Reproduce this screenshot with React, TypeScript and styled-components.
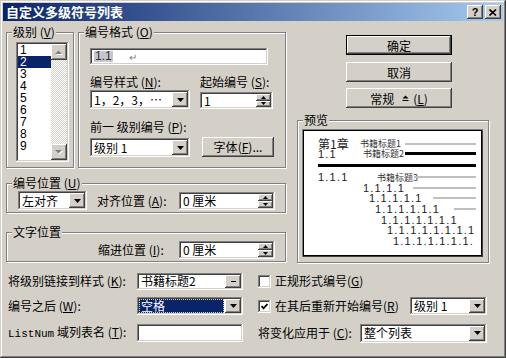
import React from 'react';
import styled, { createGlobalStyle, css } from 'styled-components';

const GlobalStyle = createGlobalStyle`
  html, body {
    margin: 0;
    padding: 0;
    background: #d4d0c8;
  }
  body {
    font-family: 'Noto Sans CJK SC', 'Liberation Sans', sans-serif;
    font-size: 12px;
    color: #000;
  }
`;

// classic 3D edges
const raised = css`
  background: #d4d0c8;
  box-shadow: inset -1px -1px #404040, inset 1px 1px #fff, inset -2px -2px #808080, inset 2px 2px #d4d0c8;
`;

const sunken = css`
  background: #fff;
  box-shadow: inset -1px -1px #fff, inset 1px 1px #808080, inset -2px -2px #d4d0c8, inset 2px 2px #404040;
`;

const Window = styled.div`
  width: 506px;
  height: 358px;
  box-sizing: border-box;
  padding: 3px;
  background: #d4d0c8;
  box-shadow: inset -1px -1px #404040, inset 1px 1px #d4d0c8, inset -2px -2px #808080, inset 2px 2px #fff;
  display: flex;
  flex-direction: column;
`;

const TitleBar = styled.div`
  height: 18px;
  display: flex;
  align-items: center;
  padding: 0 2px 0 3px;
  background: linear-gradient(to right, #0a246a, #a6caf0);
`;

const Title = styled.span`
  flex: 1;
  color: #fff;
  font-weight: bold;
  font-size: 13px;
  line-height: 18px;
`;

const CaptionButton = styled.div`
  ${raised};
  width: 16px;
  height: 14px;
  margin-left: 2px;
  display: flex;
  align-items: center;
  justify-content: center;
  font: bold 11px 'Liberation Sans', sans-serif;
`;

const Body = styled.div`
  padding: 11px 0 0 3px;
  display: flex;
  flex-direction: column;
`;

const TopRow = styled.div`
  display: flex;
  align-items: flex-start;
`;

const LeftCol = styled.div`
  width: 280px;
  display: flex;
  flex-direction: column;
`;

const RightCol = styled.div`
  width: 194px;
  margin-left: 10px;
  display: flex;
  flex-direction: column;
`;

const GroupRow = styled.div`
  display: flex;
  gap: 4px;
`;

const Group = styled.div<{ $w: number; $h: number; $mt?: number; $ml?: number }>`
  position: relative;
  box-sizing: border-box;
  width: ${({ $w }) => $w}px;
  height: ${({ $h }) => $h}px;
  margin-top: ${({ $mt }) => $mt || 0}px;
  margin-left: ${({ $ml }) => $ml || 0}px;
  border: 1px solid #808080;
  box-shadow: inset 1px 1px #fff, 1px 1px #fff;
`;

const Legend = styled.span`
  position: absolute;
  top: -8px;
  left: 5px;
  padding: 0 1px;
  background: #d4d0c8;
  line-height: 14px;
  white-space: nowrap;
`;

const GroupBody = styled.div<{ $pt: number; $pl: number }>`
  padding: ${({ $pt }) => $pt}px 0 0 ${({ $pl }) => $pl}px;
  display: flex;
  flex-direction: column;
`;

// list box
const ListBox = styled.div`
  ${sunken};
  box-sizing: border-box;
  width: 53px;
  height: 120px;
  padding: 2px;
  display: flex;
`;

const Items = styled.div`
  flex: 1;
  display: flex;
  flex-direction: column;
`;

const Item = styled.div<{ $sel?: boolean }>`
  height: 12px;
  line-height: 12px;
  padding-left: 2px;
  font-family: 'Liberation Sans', sans-serif;
  font-size: 12px;
  background: ${({ $sel }) => ($sel ? '#0a246a' : 'transparent')};
  color: ${({ $sel }) => ($sel ? '#fff' : '#000')};
`;

const ScrollBar = styled.div`
  width: 16px;
  display: flex;
  flex-direction: column;
`;

const ScrollTrack = styled.div`
  flex: 1;
  background: repeating-conic-gradient(#fff 0 25%, #d4d0c8 0 50%) 0 0 / 2px 2px;
`;

const SmallBtn = styled.div<{ $h: number }>`
  ${raised};
  width: 16px;
  height: ${({ $h }) => $h}px;
  display: flex;
  align-items: center;
  justify-content: center;
  flex-shrink: 0;
`;

// inputs
const Field = styled.div<{ $w: number; $h: number; $mt?: number }>`
  ${sunken};
  box-sizing: border-box;
  width: ${({ $w }) => $w}px;
  height: ${({ $h }) => $h}px;
  margin-top: ${({ $mt }) => $mt || 0}px;
  padding: 2px;
  display: flex;
  align-items: stretch;
  flex-shrink: 0;
`;

const FieldValue = styled.div<{ $sel?: boolean }>`
  flex: 1;
  display: flex;
  align-items: center;
  padding-left: 2px;
  margin-right: ${({ $sel }) => ($sel ? 1 : 0)}px;
  line-height: 12px;
  white-space: nowrap;
  background: ${({ $sel }) => ($sel ? '#0a246a' : 'transparent')};
  color: ${({ $sel }) => ($sel ? '#fff' : '#000')};
  outline: ${({ $sel }) => ($sel ? '1px dotted #d4d0c8' : 'none')};
  outline-offset: -1px;
`;

const Mark = styled.span`
  background: #c6c6ce;
  color: #333;
  font-family: 'Liberation Sans', sans-serif;
  padding: 0 1px;
  line-height: 11px;
`;

const ReturnMark = styled.span`
  color: #808080;
  font-size: 10px;
  margin-left: 16px;
`;

const SpinCol = styled.div`
  width: 15px;
  display: flex;
  flex-direction: column;
`;

const SpinBtn = styled.div`
  ${raised};
  flex: 1;
  display: flex;
  align-items: center;
  justify-content: center;
`;

const Button = styled.div<{ $w: number; $h: number; $mt?: number; $default?: boolean }>`
  box-sizing: border-box;
  width: ${({ $w }) => $w}px;
  height: ${({ $h }) => $h}px;
  margin-top: ${({ $mt }) => $mt || 0}px;
  display: flex;
  align-items: center;
  justify-content: center;
  white-space: nowrap;
  background: #d4d0c8;
  box-shadow: ${({ $default }) =>
    $default
      ? 'inset -1px -1px #000, inset 1px 1px #000, inset -2px -2px #404040, inset 2px 2px #fff, inset -3px -3px #808080'
      : 'inset -1px -1px #404040, inset 1px 1px #fff, inset -2px -2px #808080, inset 2px 2px #d4d0c8'};
`;

const Row = styled.div<{ $mt?: number; $h?: number; $align?: string }>`
  display: flex;
  align-items: ${({ $align }) => $align || 'center'};
  margin-top: ${({ $mt }) => $mt || 0}px;
  height: ${({ $h }) => ($h ? `${$h}px` : 'auto')};
`;

const Cell = styled.div<{ $w?: number; $ml?: number }>`
  width: ${({ $w }) => ($w ? `${$w}px` : 'auto')};
  margin-left: ${({ $ml }) => $ml || 0}px;
  flex-shrink: 0;
  white-space: nowrap;
  line-height: 14px;
`;

const ButtonStack = styled.div`
  margin: 3px 0 0 50px;
  display: flex;
  flex-direction: column;
`;

// preview
const PreviewBox = styled.div`
  box-sizing: border-box;
  width: 181px;
  height: 128px;
  background: #fff;
  box-shadow: inset 1px 1px #808080, inset -1px -1px #404040, inset 2px 2px #000, inset -2px -2px #000;
  padding: 9px 7px 0 16px;
  display: flex;
  flex-direction: column;
`;

const PRow = styled.div<{ $h: number; $indent?: number; $mt?: number }>`
  display: flex;
  align-items: center;
  height: ${({ $h }) => $h}px;
  padding-left: ${({ $indent }) => $indent || 0}px;
  margin-top: ${({ $mt }) => $mt || 0}px;
  flex-shrink: 0;
`;

const PNum = styled.span<{ $w?: number; $cjk?: boolean }>`
  width: ${({ $w }) => ($w ? `${$w}px` : 'auto')};
  flex-shrink: 0;
  white-space: nowrap;
  font-family: ${({ $cjk }) => ($cjk ? "'Noto Sans CJK SC', sans-serif" : "'Liberation Sans', sans-serif")};
  font-size: ${({ $cjk }) => ($cjk ? 12 : 11)}px;
  letter-spacing: ${({ $cjk }) => ($cjk ? 0 : 1.2)}px;
  line-height: 10px;
  color: #222;
`;

const PHeading = styled.span<{ $w: number }>`
  width: ${({ $w }) => $w}px;
  flex-shrink: 0;
  font-size: 9px;
  line-height: 9px;
  white-space: nowrap;
  color: #333;
`;

const PLine = styled.span<{ $thick?: boolean }>`
  flex: 1;
  height: ${({ $thick }) => ($thick ? 3 : 2)}px;
  background: ${({ $thick }) => ($thick ? '#000' : '#c0c0c0')};
`;

const Rule = styled.div`
  height: 3px;
  background: #000;
  margin-top: 6px;
  flex-shrink: 0;
`;

// bottom
const Bottom = styled.div`
  margin-left: 2px;
  display: flex;
  flex-direction: column;
`;

const RightPart = styled.div`
  width: 229px;
  margin-left: 15px;
  display: flex;
  align-items: center;
  justify-content: space-between;
`;

const CheckLabel = styled.div`
  display: flex;
  align-items: center;
  white-space: nowrap;
  line-height: 14px;
`;

const CheckBox = styled.div`
  ${sunken};
  width: 13px;
  height: 13px;
  margin-right: 4px;
  display: flex;
  align-items: center;
  justify-content: center;
  flex-shrink: 0;
`;

const Mono = styled.span`
  font-family: 'Liberation Mono', monospace;
  font-size: 11px;
`;

const Acc = ({ k }: { k: string }) => (
  <span>
    {' '}(<u>{k}</u>)
  </span>
);

const DownArrow = ({ small }: { small?: boolean }) => (
  <svg width="7" height="4" viewBox="0 0 7 4">
    {small ? <rect x="1" y="2" width="5" height="1" fill="#000" /> : <polygon points="0,0 7,0 3.5,4" fill="#000" />}
  </svg>
);

const GrayArrow = ({ up }: { up?: boolean }) => (
  <svg width="8" height="5" viewBox="0 0 8 5">
    <polygon points={up ? '1,5 8,5 4.5,1.5' : '1,1 8,1 4.5,4.5'} fill="#fff" />
    <polygon points={up ? '0,4 7,4 3.5,0.5' : '0,0 7,0 3.5,3.5'} fill="#808080" />
  </svg>
);

const SpinArrow = ({ up }: { up?: boolean }) => (
  <svg width="5" height="3" viewBox="0 0 5 3">
    <polygon points={up ? '0,3 5,3 2.5,0' : '0,0 5,0 2.5,3'} fill="#000" />
  </svg>
);

const Combo = ({ w, h, value, sel, mt, small }: { w: number; h: number; value: React.ReactNode; sel?: boolean; mt?: number; small?: boolean }) => (
  <Field $w={w} $h={h} $mt={mt}>
    <FieldValue $sel={sel}>{value}</FieldValue>
    <SmallBtn $h={h - 4}>
      <DownArrow small={small} />
    </SmallBtn>
  </Field>
);

const Spinner = ({ w, h, value, mt }: { w: number; h: number; value: string; mt?: number }) => (
  <Field $w={w} $h={h} $mt={mt}>
    <FieldValue>{value}</FieldValue>
    <SpinCol>
      <SpinBtn>
        <SpinArrow up />
      </SpinBtn>
      <SpinBtn>
        <SpinArrow />
      </SpinBtn>
    </SpinCol>
  </Field>
);

const levels = ['1', '2', '3', '4', '5', '6', '7', '8', '9'];

const cascade = [
  { indent: 45, w: 50, text: '1.1.1.1', line: true },
  { indent: 51, w: 64, text: '1.1.1.1.1', line: true },
  { indent: 57, w: 79, text: '1.1.1.1.1.1', line: true },
  { indent: 63, text: '1.1.1.1.1.1.1' },
  { indent: 69, text: '1.1.1.1.1.1.1.1' },
  { indent: 75, text: '1.1.1.1.1.1.1.' },
];

export default function App() {
  return (
    <>
      <GlobalStyle />
      <Window>
        <TitleBar>
          <Title>自定义多级符号列表</Title>
          <CaptionButton>?</CaptionButton>
          <CaptionButton>
            <svg width="8" height="7" viewBox="0 0 8 7">
              <path d="M0.5 0.5 L7 6.5 M7 0.5 L0.5 6.5" stroke="#000" strokeWidth="1.6" />
            </svg>
          </CaptionButton>
        </TitleBar>

        <Body>
          <TopRow>
            <LeftCol>
              <GroupRow>
                <Group $w={68} $h={136}>
                  <Legend>
                    级别<Acc k="V" />
                  </Legend>
                  <GroupBody $pt={9} $pl={9}>
                    <ListBox>
                      <Items>
                        {levels.map((l) => (
                          <Item key={l} $sel={l === '2'}>
                            {l}
                          </Item>
                        ))}
                      </Items>
                      <ScrollBar>
                        <SmallBtn $h={16}>
                          <GrayArrow up />
                        </SmallBtn>
                        <ScrollTrack />
                        <SmallBtn $h={16}>
                          <GrayArrow />
                        </SmallBtn>
                      </ScrollBar>
                    </ListBox>
                  </GroupBody>
                </Group>

                <Group $w={208} $h={136}>
                  <Legend>
                    编号格式<Acc k="O" />
                  </Legend>
                  <GroupBody $pt={15} $pl={11}>
                    <Field $w={178} $h={17}>
                      <FieldValue>
                        <Mark>1.1</Mark>
                        <ReturnMark>↵</ReturnMark>
                      </FieldValue>
                    </Field>
                    <Row $mt={10}>
                      <Cell $w={110}>
                        编号样式<Acc k="N" />:
                      </Cell>
                      <Cell>
                        起始编号<Acc k="S" />:
                      </Cell>
                    </Row>
                    <Row $mt={1} $align="flex-start">
                      <Combo w={100} h={19} value="1，2，3，…" />
                      <Cell $ml={10}>
                        <Spinner w={73} h={17} mt={2} value="1" />
                      </Cell>
                    </Row>
                    <Row $mt={11}>
                      <Cell>
                        前一 级别编号<Acc k="P" />:
                      </Cell>
                    </Row>
                    <Row $mt={3} $align="flex-end">
                      <Combo w={100} h={19} value="级别 1" />
                      <Cell $ml={12}>
                        <Button $w={72} $h={20}>
                          字体<Acc k="F" />...
                        </Button>
                      </Cell>
                    </Row>
                  </GroupBody>
                </Group>
              </GroupRow>

              <Group $w={280} $h={30} $mt={15}>
                <Legend>
                  编号位置<Acc k="U" />
                </Legend>
                <GroupBody $pt={7} $pl={11}>
                  <Row>
                    <Combo w={69} h={19} value="左对齐" />
                    <Cell $ml={10} $w={82}>
                      对齐位置<Acc k="A" />:
                    </Cell>
                    <Spinner w={96} h={18} value="0 厘米" />
                  </Row>
                </GroupBody>
              </Group>

              <Group $w={280} $h={30} $mt={19}>
                <Legend>文字位置</Legend>
                <GroupBody $pt={8} $pl={91}>
                  <Row>
                    <Cell $w={81}>
                      缩进位置<Acc k="I" />:
                    </Cell>
                    <Spinner w={96} h={18} value="0 厘米" />
                  </Row>
                </GroupBody>
              </Group>
            </LeftCol>

            <RightCol>
              <ButtonStack>
                <Button $w={106} $h={20} $default>
                  确定
                </Button>
                <Button $w={106} $h={20} $mt={7}>
                  取消
                </Button>
                <Button $w={106} $h={20} $mt={6}>
                  常规
                  <svg width="7" height="6" viewBox="0 0 7 6" style={{ margin: '0 4px 0 8px' }}>
                    <polygon points="0.5,3.5 6.5,3.5 3.5,0.5" fill="#000" />
                    <rect x="0.5" y="5" width="6" height="1" fill="#000" />
                  </svg>
                  (<u>L</u>)
                </Button>
              </ButtonStack>

              <Group $w={192} $h={143} $mt={12} $ml={1}>
                <Legend>预览</Legend>
                <GroupBody $pt={8} $pl={4}>
                  <PreviewBox>
                    <PRow $h={11}>
                      <PNum $w={42} $cjk>
                        第1章
                      </PNum>
                      <PHeading $w={45}>书籍标题1</PHeading>
                      <PLine />
                    </PRow>
                    <PRow $h={9}>
                      <PNum $w={45}>1.1</PNum>
                      <PHeading $w={42}>书籍标题2</PHeading>
                      <PLine $thick />
                    </PRow>
                    <Rule />
                    <PRow $h={10.5} $mt={5}>
                      <PNum $w={59}>1.1.1</PNum>
                      <PHeading $w={37}>书籍标题3</PHeading>
                      <PLine />
                    </PRow>
                    {cascade.map((c) => (
                      <PRow key={c.text} $h={10.6} $indent={c.indent}>
                        <PNum $w={c.w}>{c.text}</PNum>
                        {c.line && <PLine />}
                      </PRow>
                    ))}
                  </PreviewBox>
                </GroupBody>
              </Group>
            </RightCol>
          </TopRow>

          <Bottom>
            <Row $mt={10} $h={16}>
              <Cell $w={129}>
                将级别链接到样式<Acc k="K" />:
              </Cell>
              <Combo w={106} h={17} value="书籍标题2" small />
              <RightPart>
                <CheckLabel>
                  <CheckBox />
                  正规形式编号<Acc k="G" />
                </CheckLabel>
              </RightPart>
            </Row>
            <Row $mt={8} $h={18}>
              <Cell $w={129}>
                编号之后<Acc k="W" />:
              </Cell>
              <Combo w={106} h={18} value="空格" sel />
              <RightPart>
                <CheckLabel>
                  <CheckBox>
                    <svg width="7" height="7" viewBox="0 0 7 7">
                      <path d="M0.5 3 L2.5 5.3 L6.5 1" stroke="#000" strokeWidth="1.8" fill="none" />
                    </svg>
                  </CheckBox>
                  在其后重新开始编号<Acc k="R" />
                </CheckLabel>
                <Combo w={77} h={18} value="级别 1" />
              </RightPart>
            </Row>
            <Row $mt={9} $h={18}>
              <Cell $w={129}>
                <Mono>ListNum</Mono> 域列表名<Acc k="T" />:
              </Cell>
              <Field $w={106} $h={18} />
              <RightPart>
                <Cell>
                  将变化应用于<Acc k="C" />:
                </Cell>
                <Combo w={127} h={19} value="整个列表" />
              </RightPart>
            </Row>
          </Bottom>
        </Body>
      </Window>
    </>
  );
}
